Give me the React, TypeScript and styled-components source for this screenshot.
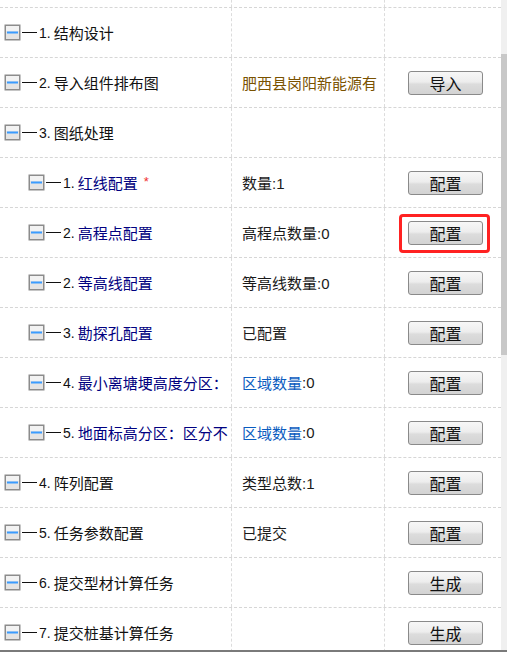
import React from "react";
import styled, { createGlobalStyle } from "styled-components";

const GlobalStyle = createGlobalStyle`
  html, body {
    margin: 0;
    padding: 0;
    background: #fff;
  }
  body {
    font-family: "Liberation Sans", "Noto Sans CJK SC", sans-serif;
  }
`;

const Page = styled.div`
  width: 507px;
  height: 652px;
  display: flex;
  flex-direction: column;
  overflow: hidden;
  background: #fff;
`;

const Body = styled.div`
  flex: 1;
  display: flex;
  overflow: hidden;
`;

const Table = styled.div`
  width: 501px;
  display: flex;
  flex-direction: column;
`;

const Row = styled.div<{ $stub?: boolean }>`
  display: grid;
  grid-template-columns: 232px 153px 1fr;
  flex: none;
  height: ${({ $stub }) => ($stub ? "8px" : "50px")};
  box-sizing: border-box;
  border-bottom: 1px dashed #d6d6d6;
`;

const Cell = styled.div<{ $divider?: boolean }>`
  display: flex;
  align-items: center;
  overflow: hidden;
  white-space: nowrap;
  box-sizing: border-box;
  border-right: ${({ $divider }) => ($divider ? "1px dashed #dcdcdc" : "none")};
`;

const LabelCell = styled(Cell)<{ $level: number }>`
  padding-left: ${({ $level }) => 4 + $level * 24}px;
`;

const ValueCell = styled(Cell)`
  padding-left: 10px;
  font-size: 15px;
  color: #1a1a1a;
`;

const ActionCell = styled(Cell)`
  padding-left: 23px;
`;

const Connector = styled.span`
  display: inline-block;
  width: 15px;
  height: 1px;
  background: #111;
  margin: 0 2px 0 1px;
  flex: none;
`;

const Num = styled.span`
  font-size: 14px;
  color: #111;
  margin-right: 3px;
`;

const Label = styled.span<{ $sub?: boolean }>`
  font-size: 15px;
  color: ${({ $sub }) => ($sub ? "#000080" : "#111")};
`;

const Required = styled.span`
  color: #f03030;
  font-size: 13px;
  margin-left: 6px;
  position: relative;
  top: -1px;
`;

const Accent = styled.span<{ $tone: "gold" | "blue" }>`
  color: ${({ $tone }) => ($tone === "gold" ? "#7a5200" : "#0a5cc0")};
`;

const Highlight = styled.span`
  display: inline-flex;
  padding: 4px 4px 5px 6px;
  margin: -7px -7px -8px -9px;
  border: 3px solid #ff2222;
  border-radius: 4px;
`;

const Button = styled.button`
  width: 75px;
  height: 24px;
  padding: 0;
  box-sizing: border-box;
  border: 1px solid #8a8a8a;
  border-radius: 3px;
  background: linear-gradient(#f7f7f7 0%, #ededed 45%, #dcdcdc 55%, #d3d3d3 100%);
  font-family: "Noto Sans CJK SC", sans-serif;
  font-size: 16px;
  line-height: 22px;
  color: #111;
`;

const Scrollbar = styled.div`
  width: 6px;
  background: #f0f0f0;
  display: flex;
  flex-direction: column;
`;

const Thumb = styled.div`
  margin-top: 54px;
  height: 301px;
  background: #c8c8c8;
`;

const BottomEdge = styled.div`
  height: 2px;
  background: #7a7a7a;
  flex: none;
`;

const Toggle = () => (
  <svg width="17" height="17" viewBox="0 0 17 17" style={{ flex: "none" }}>
    <rect x="0.5" y="0.5" width="16" height="16" fill="#8c8c8c" />
    <rect x="2" y="2" width="13" height="13" fill="#e4e4e4" />
    <rect x="2" y="2" width="13" height="5" fill="#f2f2f2" />
    <rect x="3" y="7.5" width="11" height="2" fill="#3a9cff" />
  </svg>
);

type Item = {
  level: number;
  num: string;
  label: string;
  required?: boolean;
  value?: React.ReactNode;
  action?: string;
  highlight?: boolean;
};

const items: Item[] = [
  { level: 0, num: "1.", label: "结构设计" },
  {
    level: 0,
    num: "2.",
    label: "导入组件排布图",
    value: <Accent $tone="gold">肥西县岗阳新能源有</Accent>,
    action: "导入",
  },
  { level: 0, num: "3.", label: "图纸处理" },
  { level: 1, num: "1.", label: "红线配置", required: true, value: "数量:1", action: "配置" },
  { level: 1, num: "2.", label: "高程点配置", value: "高程点数量:0", action: "配置", highlight: true },
  { level: 1, num: "2.", label: "等高线配置", value: "等高线数量:0", action: "配置" },
  { level: 1, num: "3.", label: "勘探孔配置", value: "已配置", action: "配置" },
  {
    level: 1,
    num: "4.",
    label: "最小离塘埂高度分区：",
    value: (
      <>
        <Accent $tone="blue">区域数量</Accent>:0
      </>
    ),
    action: "配置",
  },
  {
    level: 1,
    num: "5.",
    label: "地面标高分区：区分不",
    value: (
      <>
        <Accent $tone="blue">区域数量</Accent>:0
      </>
    ),
    action: "配置",
  },
  { level: 0, num: "4.", label: "阵列配置", value: "类型总数:1", action: "配置" },
  { level: 0, num: "5.", label: "任务参数配置", value: "已提交", action: "配置" },
  { level: 0, num: "6.", label: "提交型材计算任务", action: "生成" },
  { level: 0, num: "7.", label: "提交桩基计算任务", action: "生成" },
];

export default function App() {
  return (
    <Page>
      <GlobalStyle />
      <Body>
        <Table>
          <Row $stub>
            <Cell $divider />
            <Cell $divider />
            <Cell />
          </Row>
          {items.map((item, i) => (
            <Row key={i}>
              <LabelCell $divider $level={item.level}>
                <Toggle />
                <Connector />
                <Num>{item.num}</Num>
                <Label $sub={item.level > 0}>{item.label}</Label>
                {item.required && <Required>*</Required>}
              </LabelCell>
              <ValueCell $divider>{item.value}</ValueCell>
              <ActionCell>
                {item.action &&
                  (item.highlight ? (
                    <Highlight>
                      <Button>{item.action}</Button>
                    </Highlight>
                  ) : (
                    <Button>{item.action}</Button>
                  ))}
              </ActionCell>
            </Row>
          ))}
        </Table>
        <Scrollbar>
          <Thumb />
        </Scrollbar>
      </Body>
      <BottomEdge />
    </Page>
  );
}
